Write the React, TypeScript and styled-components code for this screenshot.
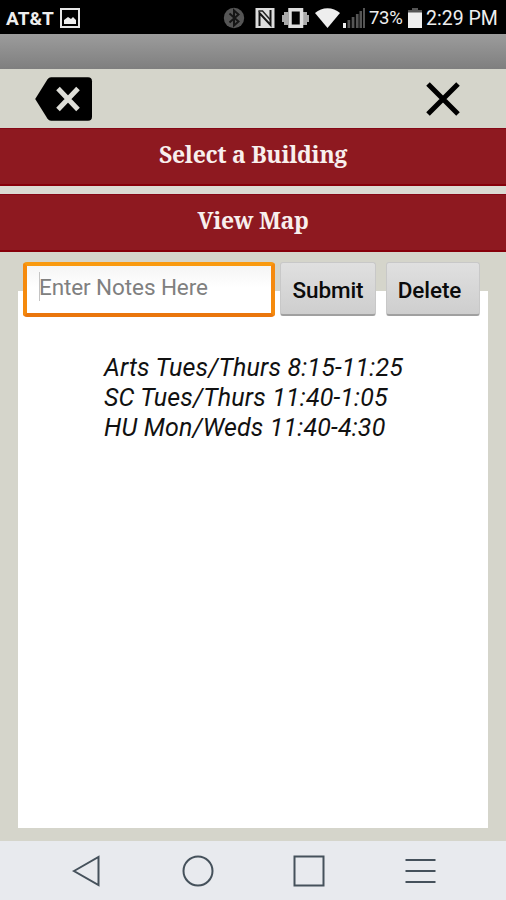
import React from "react";
import styled, { createGlobalStyle } from "styled-components";

const GlobalStyle = createGlobalStyle`
  * { box-sizing: border-box; }
  body { margin: 0; background: #d5d5cb; }
`;

const Screen = styled.div`
  width: 506px;
  height: 900px;
  display: flex;
  flex-direction: column;
  overflow: hidden;
  background: #d5d5cb;
  font-family: Roboto, "Liberation Sans", sans-serif;
`;

const StatusBar = styled.header`
  height: 34px;
  flex: none;
  display: flex;
  align-items: center;
  padding: 2px 4px 0 6px;
  background: #000;
  color: #eee;
  white-space: nowrap;
  svg { flex: none; display: block; }
`;

const Carrier = styled.span`
  width: 54px;
  font-size: 19px;
  font-weight: 700;
  letter-spacing: 0;
`;

const StatusIcons = styled.div`
  margin-left: 142px;
  display: flex;
  align-items: center;
`;

const StatusText = styled.span<{ $width: number; $size: number; $spacing: number }>`
  width: ${(p) => p.$width}px;
  font-size: ${(p) => p.$size}px;
  letter-spacing: ${(p) => p.$spacing}px;
`;

const TitleStrip = styled.div`
  height: 35px;
  flex: none;
  background: linear-gradient(#9c9c9c, #7f7f7f);
`;

const Toolbar = styled.div`
  height: 59px;
  flex: none;
  display: flex;
  justify-content: space-between;
  align-items: center;
  padding: 0 44px 0 34px;
`;

const IconButton = styled.button`
  display: block;
  padding: 0;
  border: 0;
  background: none;
  svg { display: block; }
`;

const Menu = styled.nav`
  flex: none;
  display: flex;
  flex-direction: column;
  gap: 8px;
  background: #dbdbd3;
`;

const MenuButton = styled.button`
  height: 58px;
  padding: 0 0 4px;
  border: 0;
  border-top: 1px solid #850817;
  border-bottom: 2px solid #87000b;
  background: #8e1920;
  color: #f8efed;
  font: 700 23px/1 "Noto Serif", "DejaVu Serif Condensed", "DejaVu Serif", serif;
  letter-spacing: -0.3px;
`;

const Content = styled.main`
  flex: 1;
  display: flex;
  flex-direction: column;
  padding: 10px 18px 13px;
`;

const Form = styled.div`
  position: relative;
  z-index: 1;
  flex: none;
  display: flex;
  padding-left: 5px;
  height: 55px;
`;

const Field = styled.div`
  width: 252px;
  display: flex;
  align-items: center;
  padding: 0 12px 6px;
  border: 4px solid #f58a0d;
  border-color: #f99a10 #f58a0d #ea760c;
  border-radius: 4px;
  background: linear-gradient(#f5f5f5, #fff 45%);
`;

const NoteInput = styled.input`
  width: 100%;
  height: 29px;
  padding: 0;
  border: 0;
  border-left: 1px solid #c4c4c4;
  outline: 0;
  background: none;
  font: 400 22.5px Roboto, sans-serif;
  letter-spacing: -0.1px;
  text-indent: -1px;
  color: #222;
  &::placeholder { color: #808080; opacity: 1; }
`;

const ActionButton = styled.button<{ $width: number; $gap: number; $inset: number }>`
  width: ${(p) => p.$width}px;
  height: 54px;
  margin-left: ${(p) => p.$gap}px;
  padding: 2px ${(p) => p.$inset}px 0 0;
  border: 1px solid #c8c8c8;
  border-bottom: 2px solid #a0a0a0;
  border-radius: 3px;
  background: linear-gradient(#e0e0e0, #cecece);
  color: #0b0b0b;
  font: 500 22.5px Roboto, sans-serif;
  letter-spacing: -0.1px;
`;

const Notes = styled.section`
  flex: 1;
  margin-top: -26px;
  padding: 62px 0 0 86px;
  background: #fff;
  color: #111;
  font-size: 25px;
  font-style: italic;
  line-height: 30px;
  letter-spacing: 0.16px;
  white-space: nowrap;
`;

const Note = styled.div``;

const NavBar = styled.footer`
  height: 59px;
  flex: none;
  display: flex;
  justify-content: space-between;
  align-items: center;
  padding: 1px 70px 0 71px;
  background: #e8eaee;
`;

const NavIcon = styled.svg`
  display: block;
  fill: none;
  stroke: #45515b;
  stroke-width: 2;
`;

const notes = [
  "Arts Tues/Thurs 8:15-11:25",
  "SC Tues/Thurs 11:40-1:05",
  "HU Mon/Weds 11:40-4:30",
];

export default function App() {
  return (
    <>
      <GlobalStyle />
      <Screen>
        <StatusBar>
          <Carrier>AT&amp;T</Carrier>
          <svg width="20" height="20" viewBox="0 0 20 20">
            <path fill="none" stroke="#e6e6e6" strokeWidth="2" d="M1 1h18v18H1z" />
            <path fill="#eee" d="M4 16v-4l4-3 3 2 2-2 3 3v4z" />
          </svg>
          <StatusIcons>
            <svg width="23" height="22" viewBox="0 0 23 22">
              <circle cx="12" cy="11" r="10.2" fill="#555" />
              <path d="M7.500 6.500l9 8-4.500 4v-15l4.500 4-9 8" fill="none" stroke="#151515" strokeWidth="2" />
            </svg>
            <svg width="35" height="22" viewBox="0 0 35 22">
              <path fill="#ddd" d="M10.500 1h19v20h-19z" />
              <path d="M14.500 19V6l11 12V3" fill="none" stroke="#151515" strokeWidth="2" />
              <path d="M13.500 4h4l8 9" fill="none" stroke="#222" strokeWidth="1.500" />
            </svg>
            <svg width="35" height="22" viewBox="0 0 35 22">
              <path fill="#aaa" d="M2 8h2V5h4v13H4v-3H2zM29 8h-2V5h-4v13h4v-3h2z" />
              <path fill="none" stroke="#ddd" strokeWidth="3.500" d="M10 2.700h11.500v16.600H10z" />
            </svg>
            <svg width="28" height="22" viewBox="0 0 28 22">
              <path fill="#eee" d="M0 6C7-.5 18-.5 25 6L12.500 21z" />
            </svg>
            <svg width="26" height="22" viewBox="0 0 26 22">
              <path fill="#eee" d="M0 16h3v5H0z" />
              <path fill="#555" d="M4.500 13h2.700v8H4.500zM8.700 10h2.700v11H8.700zM12.900 7h2.700v14h-2.700zM16.500 4h2.500v17h-2.500zM20 1h2v20h-2z" />
            </svg>
          </StatusIcons>
          <StatusText $width={39} $size={18.5} $spacing={-0.3}>73%</StatusText>
          <svg width="18" height="22" viewBox="0 0 18 22">
            <path fill="#555" d="M4 1h6v2h4v3H0V3h4z" />
            <path fill="#eee" d="M0 5.500h14V21H0z" />
          </svg>
          <StatusText $width={73} $size={19.5} $spacing={0}>2:29 PM</StatusText>
        </StatusBar>
        <TitleStrip />
        <Toolbar>
          <IconButton aria-label="Back">
            <svg width="60" height="46" viewBox="0 0 60 46">
              <path fill="#000" d="M17 1.200h37q4 0 4 4v35.600q0 4-4 4H17q-2 0-3.500-2L1.200 23 13.500 3.200q1.500-2 3.500-2z" />
              <path d="M24 12.500l20 21m0-21l-20 21" stroke="#deded8" strokeWidth="5" fill="none" />
            </svg>
          </IconButton>
          <IconButton aria-label="Close">
            <svg width="37" height="40" viewBox="0 0 37 40">
              <path d="M3 5l30 30m0-30l-30 30" stroke="#000" strokeWidth="5" fill="none" />
            </svg>
          </IconButton>
        </Toolbar>
        <Menu>
          <MenuButton>Select a Building</MenuButton>
          <MenuButton>View Map</MenuButton>
        </Menu>
        <Content>
          <Form>
            <Field>
              <NoteInput placeholder="Enter Notes Here" />
            </Field>
            <ActionButton $width={96} $gap={5} $inset={0}>Submit</ActionButton>
            <ActionButton $width={94} $gap={10} $inset={7}>Delete</ActionButton>
          </Form>
          <Notes>
            {notes.map((text) => (
              <Note key={text}>{text}</Note>
            ))}
          </Notes>
        </Content>
        <NavBar>
          <NavIcon width="32" height="32" viewBox="0 0 32 32">
            <path d="M3 16L27.500 2v28z" />
          </NavIcon>
          <NavIcon width="32" height="32" viewBox="0 0 32 32">
            <circle cx="16" cy="16" r="14.500" />
          </NavIcon>
          <NavIcon width="32" height="32" viewBox="0 0 32 32">
            <path d="M1.500 1.500h29v29h-29z" />
          </NavIcon>
          <NavIcon width="32" height="32" viewBox="0 0 32 32">
            <path d="M1.500 5h30M1.500 16h30M1.500 27h30" />
          </NavIcon>
        </NavBar>
      </Screen>
    </>
  );
}
